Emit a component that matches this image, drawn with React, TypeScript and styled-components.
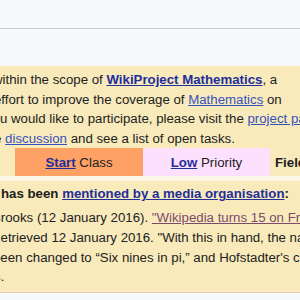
import React from 'react';
import styled, { createGlobalStyle } from 'styled-components';

const GlobalStyle = createGlobalStyle`
  html, body {
    margin: 0;
    padding: 0;
    background: #f7f9fc;
    overflow: hidden;
  }
  body {
    font-family: "Liberation Sans", Arial, sans-serif;
    color: #202122;
  }
`;

const Page = styled.div`
  width: 300px;
  height: 300px;
  display: flex;
  flex-direction: column;
  overflow: hidden;
`;

const TopBar = styled.div`
  height: 28px;
  flex: 0 0 28px;
  border-bottom: 1px solid #c8ccd1;
`;

const Spacer = styled.div`
  flex: 0 0 37px;
`;

const Banner = styled.div`
  background: #f8eaba;
  padding-top: 4px;
`;

const Line = styled.div<{ shift: number; bold?: boolean }>`
  white-space: nowrap;
  font-size: 13.25px;
  line-height: 19.6px;
  margin-left: ${({ shift }) => shift}px;
  font-weight: ${({ bold }) => (bold ? 'bold' : 'normal')};
`;

const Link = styled.a<{ strong?: boolean; visited?: boolean }>`
  color: ${({ strong, visited }) => (visited ? '#7d4a6e' : strong ? '#1f2f9c' : '#3651bd')};
  font-weight: ${({ strong }) => (strong ? 'bold' : 'inherit')};
  text-decoration: underline;
  cursor: pointer;
`;

const Row = styled.div`
  display: flex;
  height: 28px;
  font-size: 13.25px;
`;

const Cell = styled.div<{ bg: string; w: number }>`
  flex: 0 0 ${({ w }) => w}px;
  background: ${({ bg }) => bg};
  display: flex;
  align-items: center;
  justify-content: center;
  white-space: nowrap;
`;

const FieldCell = styled.div`
  flex: 1;
  display: flex;
  align-items: center;
  padding-left: 5px;
  font-weight: bold;
  white-space: nowrap;
  overflow: hidden;
  background: #f8eaba;
`;

const Gap = styled.div`
  flex: 0 0 5px;
  background: #fbf6e6;
`;

const MediaBox = styled.div`
  background: #f8eaba;
  border-bottom: 1px solid #ddd3ae;
  height: 108px;
  padding-top: 3px;
  box-sizing: content-box;
`;

const Title = styled(Line)`
  margin-bottom: 4.5px;
`;

export default function App() {
  return (
    <Page>
      <GlobalStyle />
      <TopBar />
      <Spacer />
      <Banner>
        <Line shift={-7}>
          within the scope of <Link strong>WikiProject Mathematics</Link>, a
        </Line>
        <Line shift={-6}>
          effort to improve the coverage of <Link>Mathematics</Link> on
        </Line>
        <Line shift={-14}>
          you would like to participate, please visit the <Link>project page</Link>
        </Line>
        <Line shift={-17}>
          the <Link>discussion</Link> and see a list of open tasks.
        </Line>
        <Row>
          <Cell bg="#f8eaba" w={15} />
          <Cell bg="#fda264" w={128}>
            <Link strong>Start</Link>&nbsp;Class
          </Cell>
          <Cell bg="#fde0fd" w={127}>
            <Link strong>Low</Link>&nbsp;Priority
          </Cell>
          <FieldCell>Field</FieldCell>
        </Row>
      </Banner>
      <Gap />
      <MediaBox>
        <Title shift={1} bold>
          has been <Link strong>mentioned by a media organisation</Link>:
        </Title>
        <Line shift={-8}>
          Brooks (12 January 2016). <Link visited>"Wikipedia turns 15 on Friday"</Link>
        </Line>
        <Line shift={-9}>
          Retrieved 12 January 2016. "With this in hand, the name
        </Line>
        <Line shift={-7}>
          been changed to “Six nines in pi,” and Hofstadter's comment
        </Line>
        <Line shift={-6}>
          s.
        </Line>
      </MediaBox>
    </Page>
  );
}
